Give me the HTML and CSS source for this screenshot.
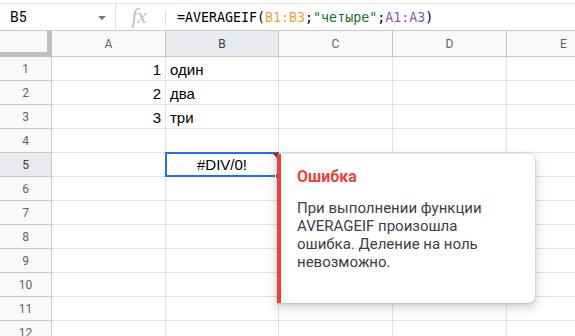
FILE: index.html
```html
<!DOCTYPE html>
<html>
<head>
<meta charset="utf-8">
<link rel="stylesheet" href="styles.css">
</head>
<body>
<div class="app">
  <div class="formula-bar">
    <div class="name-box">
      <span class="name">B5</span>
      <span class="caret"></span>
    </div>
    <div class="fx-box"><span class="fx">fx</span></div>
    <div class="formula"><span class="f-plain">=AVERAGEIF(</span><span class="f-orange">B1:B3</span><span class="f-plain">;</span><span class="f-green">"четыре"</span><span class="f-plain">;</span><span class="f-purple">A1:A3</span><span class="f-plain">)</span></div>
  </div>
  <div class="sheet-wrap">
    <div class="sheet">
      <div class="corner"></div>
      <div class="colh">A</div>
      <div class="colh sel">B</div>
      <div class="colh">C</div>
      <div class="colh">D</div>
      <div class="colh">E</div>

      <div class="rowh">1</div><div class="cell num">1</div><div class="cell">один</div><div class="cell"></div><div class="cell"></div><div class="cell"></div>
      <div class="rowh">2</div><div class="cell num">2</div><div class="cell">два</div><div class="cell"></div><div class="cell"></div><div class="cell"></div>
      <div class="rowh">3</div><div class="cell num">3</div><div class="cell">три</div><div class="cell"></div><div class="cell"></div><div class="cell"></div>
      <div class="rowh">4</div><div class="cell"></div><div class="cell"></div><div class="cell"></div><div class="cell"></div><div class="cell"></div>
      <div class="rowh sel">5</div><div class="cell"></div><div class="cell center active">#DIV/0!<span class="err-mark"></span><span class="handle"></span></div><div class="cell"></div><div class="cell"></div><div class="cell"></div>
      <div class="rowh">6</div><div class="cell"></div><div class="cell"></div><div class="cell"></div><div class="cell"></div><div class="cell"></div>
      <div class="rowh">7</div><div class="cell"></div><div class="cell"></div><div class="cell"></div><div class="cell"></div><div class="cell"></div>
      <div class="rowh">8</div><div class="cell"></div><div class="cell"></div><div class="cell"></div><div class="cell"></div><div class="cell"></div>
      <div class="rowh">9</div><div class="cell"></div><div class="cell"></div><div class="cell"></div><div class="cell"></div><div class="cell"></div>
      <div class="rowh">10</div><div class="cell"></div><div class="cell"></div><div class="cell"></div><div class="cell"></div><div class="cell"></div>
      <div class="rowh">11</div><div class="cell"></div><div class="cell"></div><div class="cell"></div><div class="cell"></div><div class="cell"></div>
      <div class="rowh">12</div><div class="cell"></div><div class="cell"></div><div class="cell"></div><div class="cell"></div><div class="cell"></div>
    </div>
    <div class="tooltip">
      <div class="tt-title">Ошибка</div>
      <div class="tt-body">При выполнении функции<br>AVERAGEIF произошла<br>ошибка. Деление на ноль<br>невозможно.</div>
    </div>
  </div>
</div>
</body>
</html>
```
FILE: styles.css
```css
* { box-sizing: border-box; }
html, body { margin: 0; padding: 0; background: #fff; }
body { width: 575px; height: 336px; overflow: hidden; font-family: Roboto, "Noto Sans", sans-serif; }

.app { padding-top: 3px; }

.formula-bar {
  display: flex;
  height: 28px;
  border-top: 1px solid #e3e3e3;
  border-bottom: 1px solid #c7c7c7;
  align-items: stretch;
}
.name-box {
  width: 116px;
  display: flex;
  align-items: center;
  justify-content: space-between;
  padding: 0 9px 0 10px;
  border-right: 1px solid #e0e0e0;
}
.name { font-size: 14px; color: #000; }
.caret {
  width: 0; height: 0;
  border-left: 4px solid transparent;
  border-right: 4px solid transparent;
  border-top: 4px solid #757575;
  margin-top: 1px;
}
.fx-box {
  width: 50px;
  display: flex;
  align-items: center;
  justify-content: center;
  position: relative;
}
.fx-box::after {
  content: "";
  position: absolute;
  right: 0; top: 6px; bottom: 5px;
  width: 1px;
  background: #dadce0;
}
.fx {
  font-family: "Liberation Serif", serif;
  font-style: italic;
  font-size: 21px;
  color: #bdc1c6;
  margin-top: -2px;
  padding-right: 4px;
}
.formula {
  padding-left: 11px;
  display: flex;
  align-items: center;
  font-family: "DejaVu Sans Mono", monospace;
  font-size: 13.3px;
  white-space: pre;
}
.f-plain { color: #000; }
.f-orange { color: #f4a03b; }
.f-green { color: #137333; }
.f-purple { color: #8e5ba8; }

.sheet-wrap { position: relative; }

.sheet {
  display: grid;
  grid-template-columns: 52px 114px 113px 114px 114px 114px;
  grid-template-rows: 26px;
  grid-auto-rows: 24px;
  width: 621px;
}
.corner {
  background: #f8f9fa;
  border-right: 5px solid #c0c0c0;
  border-bottom: 5px solid #c0c0c0;
}
.colh, .rowh {
  background: #f8f9fa;
  border-right: 1px solid #c7c7c7;
  border-bottom: 1px solid #c7c7c7;
  display: flex;
  align-items: center;
  justify-content: center;
  font-size: 12px;
  color: #5f6368;
}
.colh.sel, .rowh.sel { background: #e8eaed; color: #3c4043; }

.cell {
  border-right: 1px solid #e2e3e3;
  border-bottom: 1px solid #e2e3e3;
  display: flex;
  align-items: flex-end;
  padding: 0 4px 2px 4px;
  font-family: "Liberation Sans", Arial, sans-serif;
  font-size: 15px;
  line-height: 17px;
  color: #000;
}
.cell.num { justify-content: flex-end; }
.cell.center { justify-content: center; align-items: center; padding-bottom: 0; }
.cell.active { position: relative; }
.cell.active::after {
  content: "";
  position: absolute;
  left: -1px; top: -1px; right: -1px; bottom: -1px;
  border: 2px solid #1a73e8;
}
.err-mark {
  position: absolute;
  right: 0; top: 0;
  width: 0; height: 0;
  border-top: 6px solid #b3261e;
  border-left: 6px solid transparent;
  z-index: 2;
}
.handle {
  position: absolute;
  right: -3px; bottom: -3px;
  width: 6px; height: 6px;
  background: #1a73e8;
  border: 1px solid #fff;
  z-index: 2;
}

.tooltip {
  position: absolute;
  left: 277px;
  top: 123px;
  width: 258px;
  height: 149px;
  background: #fff;
  border-left: 4px solid #ea4335;
  border-radius: 0 7px 7px 0;
  box-shadow: 0 1px 3px rgba(60,64,67,0.3), 0 4px 10px 3px rgba(60,64,67,0.15);
  padding: 14px 16px;
  z-index: 5;
}
.tt-title {
  font-size: 16px;
  font-weight: 700;
  line-height: 18px;
  color: #ea4335;
}
.tt-body {
  margin-top: 13px;
  font-size: 15px;
  line-height: 18px;
  color: #3c4043;
}
```
